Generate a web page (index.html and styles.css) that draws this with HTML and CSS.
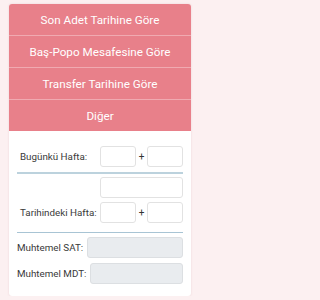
FILE: index.html
```html
<!DOCTYPE html>
<html lang="tr">
<head>
<meta charset="utf-8">
<meta name="viewport" content="width=200">
<link rel="stylesheet" href="styles.css">
</head>
<body>
<div class="card">
  <div class="menu">
    <div class="btn">Son Adet Tarihine Göre</div>
    <div class="btn">Baş-Popo Mesafesine Göre</div>
    <div class="btn">Transfer Tarihine Göre</div>
    <div class="btn">Diğer</div>
  </div>
  <div class="form">
    <div class="row">
      <span class="label">Bugünkü Hafta:</span>
      <span class="box"></span>
      <span class="plus">+</span>
      <span class="box"></span>
    </div>
    <div class="line thick"></div>
    <div class="wide box"></div>
    <div class="row row2">
      <span class="label">Tarihindeki Hafta:</span>
      <span class="box"></span>
      <span class="plus">+</span>
      <span class="box"></span>
    </div>
    <div class="line thin"></div>
    <div class="out first">
      <span class="olabel">Muhtemel SAT:</span>
      <span class="obox"></span>
    </div>
    <div class="out">
      <span class="olabel">Muhtemel MDT:</span>
      <span class="obox"></span>
    </div>
  </div>
</div>
</body>
</html>
```
FILE: styles.css
```css
html, body {
  margin: 0;
  padding: 0;
  background: #fcf0f1;
  font-family: Roboto, "Liberation Sans", sans-serif;
}
.card {
  margin: 4px 9px 0;
  width: 182px;
  background: #fff;
  border-radius: 3px;
  box-shadow: 0 0 2px rgba(200, 150, 155, 0.35);
  overflow: hidden;
}
.btn {
  height: 31px;
  display: flex;
  align-items: center;
  justify-content: center;
  background: #e8808a;
  color: #fff;
  font-size: 11.7px;
  border-bottom: 1px solid #f0aab1;
  box-sizing: content-box;
  white-space: nowrap;
}
.btn:last-child {
  border-bottom: none;
}
.form {
  padding: 15px 8px 12px;
}
.row {
  display: flex;
  align-items: center;
  height: 21px;
}
.label {
  flex: 0 0 80px;
  padding-left: 3px;
  font-size: 9.8px;
  color: #3a3a3a;
  white-space: nowrap;
}
.box {
  display: block;
  flex: 0 0 36px;
  width: 36px;
  height: 21px;
  box-sizing: border-box;
  border: 1px solid #e2e2e2;
  border-radius: 3px;
  background: #fff;
}
.plus {
  flex: 0 0 11px;
  text-align: center;
  font-size: 10px;
  color: #333;
}
.line {
  background: #bcd2dd;
}
.thick {
  height: 2px;
  margin-top: 5px;
}
.wide {
  width: 83px;
  margin: 3px 0 0 83px;
}
.row2 {
  margin-top: 4px;
}
.thin {
  height: 1px;
  margin-top: 9px;
  background: #a8c4d4;
}
.out {
  display: flex;
  align-items: center;
  margin-top: 5px;
}
.out.first {
  margin-top: 4px;
}
.olabel {
  flex: 0 0 65px;
  padding-right: 4px;
  text-align: right;
  font-size: 9.8px;
  color: #3a3a3a;
  white-space: nowrap;
}
.obox {
  display: block;
  width: 97px;
  height: 21px;
  box-sizing: border-box;
  border: 1px solid #dcdfe2;
  border-radius: 3px;
  background: #e9ecef;
}
```
